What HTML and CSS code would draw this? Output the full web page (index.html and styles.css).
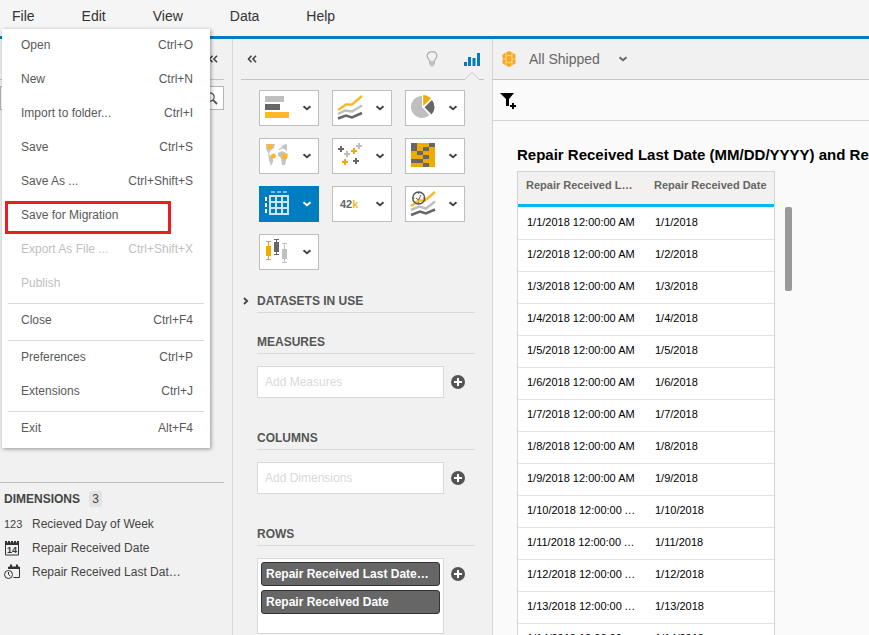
FILE: index.html
```html
<!DOCTYPE html>
<html lang="en">
<head>
    <meta charset="UTF-8">
    <meta name="viewport" content="width=device-width, initial-scale=1.0">
    <title>All Shipped</title>
    <link rel="stylesheet" href="styles.css">
</head>
<body>
    <svg class="defs" aria-hidden="true">
        <symbol id="chevron" viewBox="0 0 10 6"><path d="M1.5 1.2 L5 4.2 L8.5 1.2" fill="none" stroke="currentColor" stroke-width="2"/></symbol>
        <symbol id="collapse" viewBox="0 0 10 8"><path d="M4.5 .8 L1.5 4 L4.5 7.2 M9 .8 L6 4 L9 7.2" fill="none" stroke="currentColor" stroke-width="1.6"/></symbol>
        <symbol id="plus" viewBox="0 0 14 14"><circle cx="7" cy="7" r="7" fill="#555"/><path d="M7 3 V11 M3 7 H11" stroke="#fff" stroke-width="2"/></symbol>
    </svg>

    <nav class="menubar">
        <div class="menu">
            <button type="button" class="menu-title">File</button>
            <div class="dropdown">
                <button type="button" class="item"><span>Open</span><span>Ctrl+O</span></button>
                <button type="button" class="item"><span>New</span><span>Ctrl+N</span></button>
                <button type="button" class="item"><span>Import to folder...</span><span>Ctrl+I</span></button>
                <button type="button" class="item"><span>Save</span><span>Ctrl+S</span></button>
                <button type="button" class="item"><span>Save As ...</span><span>Ctrl+Shift+S</span></button>
                <button type="button" class="item marked"><span>Save for Migration</span></button>
                <button type="button" class="item" disabled><span>Export As File ...</span><span>Ctrl+Shift+X</span></button>
                <button type="button" class="item" disabled><span>Publish</span></button>
                <hr>
                <button type="button" class="item"><span>Close</span><span>Ctrl+F4</span></button>
                <hr>
                <button type="button" class="item"><span>Preferences</span><span>Ctrl+P</span></button>
                <button type="button" class="item"><span>Extensions</span><span>Ctrl+J</span></button>
                <hr>
                <button type="button" class="item"><span>Exit</span><span>Alt+F4</span></button>
            </div>
        </div>
        <button type="button" class="menu-title">Edit</button>
        <button type="button" class="menu-title">View</button>
        <button type="button" class="menu-title">Data</button>
        <button type="button" class="menu-title">Help</button>
    </nav>

    <div class="app">
        <aside class="data-panel">
            <div class="panel-head data-head">
                <button type="button" class="icon-btn" aria-label="Collapse data panel"><svg width="10" height="8"><use href="#collapse"/></svg></button>
            </div>
            <div class="search">
                <input type="text" aria-label="Search">
                <svg width="13" height="13" viewBox="0 0 13 13" fill="none" stroke="#555"><circle cx="5" cy="5" r="4.2" stroke-width="1.2"/><path d="M8.2 8.2 L12 12" stroke-width="1.8"/></svg>
            </div>
            <div class="measure-list"></div>
            <div class="dimensions">
                <h2>DIMENSIONS <span class="count">3</span></h2>
                <ul>
                    <li><span class="num">123</span>Recieved Day of Week</li>
                    <li>
                        <svg width="17" height="16" viewBox="0 0 17 16"><path d="M1.5 2.5 H14.5 V15 H1.5 Z" fill="none" stroke="#333"/><path d="M1 1 H15 V5 H1 Z" fill="#333"/><path d="M3.5 0 V2.5 M6.5 0 V2.5 M9.5 0 V2.5 M12.5 0 V2.5" stroke="#f1f1f1"/><text x="8" y="13" text-anchor="middle" class="cal-day">14</text></svg>
                        Repair Received Date
                    </li>
                    <li>
                        <svg width="17" height="16" viewBox="0 0 17 16" fill="none" stroke="#333"><path d="M4.5 4.5 V3 H15.5 V13.5 H9.5"/><path d="M4 4 H16" stroke-width="2"/><path d="M7 .5 V4 M13 .5 V4" stroke-width="2"/><circle cx="4.5" cy="10.5" r="4" fill="#f1f1f1"/><path d="M4.5 8 V10.5 L6.2 12"/></svg>
                        Repair Received Last Dat…
                    </li>
                </ul>
            </div>
        </aside>

        <section class="chart-panel">
            <div class="panel-head chart-head">
                <button type="button" class="icon-btn" aria-label="Collapse chart panel"><svg width="10" height="8"><use href="#collapse"/></svg></button>
                <button type="button" class="icon-btn bulb" aria-label="Suggestions">
                    <svg width="12" height="16" viewBox="0 0 12 16" fill="none" stroke="#b5b5b5" stroke-width="1.4"><path d="M4 11 C4 8.5 1.2 7.8 1.2 4.8 C1.2 2.4 3.3 .8 6 .8 S10.8 2.4 10.8 4.8 C10.8 7.8 8 8.5 8 11 Z"/><path d="M4 11 V13 H8 V11 M4.5 14.6 H7.5"/></svg>
                </button>
                <button type="button" class="icon-btn tab" aria-label="Chart builder">
                    <svg width="16" height="13" viewBox="0 0 16 13" fill="#007cc0"><path d="M0 9 H3 V13 H0 Z M4 4 H7 V13 H4 Z M8.5 5 H11.5 V13 H8.5 Z M13 0 H16 V13 H13 Z"/></svg>
                    <svg class="notch" width="14" height="8" viewBox="0 0 14 8"><path d="M0 7.5 L7 .5 L14 7.5 V8 H0 Z" fill="#f1f1f1"/><path d="M0 7.5 L7 .5 L14 7.5" fill="none" stroke="#ccc"/></svg>
                </button>
            </div>

            <div class="chart-types">
                <button type="button" aria-label="Bar chart">
                    <svg class="pic" viewBox="0 0 24 24"><path d="M0 0 H19 V6 H0 Z" fill="#bfbfbf"/><path d="M0 8 H15 V14 H0 Z" fill="#666"/><path d="M0 16 H24 V22 H0 Z" fill="#fcb827"/></svg>
                    <svg class="chev"><use href="#chevron"/></svg>
                </button>
                <button type="button" aria-label="Line chart">
                    <svg class="pic" viewBox="0 0 24 24" fill="none" stroke-width="2.5"><path d="M0 14 L8 8.5 H14 L24 0" stroke="#fcb827"/><path d="M0 18 L7 14.5 L14 15.5 L24 9.5" stroke="#bfbfbf"/><path d="M0 22.5 L8 19.5 L14 21.5 L24 17" stroke="#666"/></svg>
                    <svg class="chev"><use href="#chevron"/></svg>
                </button>
                <button type="button" aria-label="Pie chart">
                    <svg class="pic" viewBox="0 0 24 24"><path d="M11 0 A11 11 0 1 0 18.5 19 L11 11 Z" fill="#bfbfbf"/><path d="M12.2 -1 A11 11 0 0 1 20 2.4 L12.2 10 Z" fill="#f0ab00"/><path d="M21 4 A11 11 0 0 1 20.5 18.6 L13.5 11.2 Z" fill="#666"/></svg>
                    <svg class="chev"><use href="#chevron"/></svg>
                </button>
                <button type="button" aria-label="Geo chart">
                    <svg class="pic" viewBox="0 0 24 24"><path d="M1 0 H10 L9 4 L5 7 L4 10 L1 5 Z M3 9 L8 14 L8 18 L6 22 L4 16 Z M13 6 L18 1 L22 0 V7 L19 5 Z M13 9 L17 7 L23 10 L21 16 L20 21 H17 L16 14 L13 12 Z" fill="#c4c4c4"/><path d="M15 3 L19 6" stroke="#fff"/><g fill="#fcb827"><circle cx="5" cy="2.5" r="2.8"/><circle cx="8.4" cy="12" r="2.5"/><circle cx="19.5" cy="12.5" r="3"/></g></svg>
                    <svg class="chev"><use href="#chevron"/></svg>
                </button>
                <button type="button" aria-label="Scatter plot">
                    <svg class="pic" viewBox="0 0 24 24" stroke-width="2"><path d="M0 5 H6 M3 2 V8 M15 17 H21 M18 14 V20" stroke="#666"/><path d="M13 7 H19 M16 4 V10 M4 18 H10 M7 15 V21" stroke="#f0ab00"/><path d="M18 2 H24 M21 -1 V5 M6 10 H12 M9 7 V13" stroke="#bfbfbf"/></svg>
                    <svg class="chev"><use href="#chevron"/></svg>
                </button>
                <button type="button" aria-label="Heat map">
                    <svg class="pic" viewBox="0 0 24 24"><path d="M0 -1 H24 V23 H0 Z" fill="#f0ab00"/><path d="M0 -1 H6 V7 H0 Z M18 -1 H24 V3 H18 Z M12 3 H18 V7 H12 Z M6 7 H12 V11 H6 Z M12 11 H18 V15 H12 Z M0 15 H12 V19 H0 Z M12 19 H18 V23 H12 Z" fill="#666"/></svg>
                    <svg class="chev"><use href="#chevron"/></svg>
                </button>
                <button type="button" class="active" aria-label="Table">
                    <svg class="pic" viewBox="0 0 24 24" fill="none" stroke-width="2"><path d="M6 0 H10 M12 0 H16 M18 0 H22" stroke="#7fbddf"/><path d="M1 5 V9 M1 11 V15 M1 17 V21" stroke="#fff"/><path d="M5 4 H23 V22 H5 Z M5 10 H23 M5 16 H23 M11 4 V22 M17 4 V22" stroke="#cce5f2"/></svg>
                    <svg class="chev"><use href="#chevron"/></svg>
                </button>
                <button type="button" aria-label="Numeric point">
                    <span class="pic numeric">42<b>k</b></span>
                    <svg class="chev"><use href="#chevron"/></svg>
                </button>
                <button type="button" aria-label="Time series">
                    <svg class="pic" viewBox="0 0 24 24" fill="none" stroke-width="2.5"><path d="M0 14 L8 8.5 H14 L24 0" stroke="#fcb827"/><path d="M0 18 L8 14.5 L15 16.5 L24 9.5" stroke="#bfbfbf"/><path d="M0 23 L9 19.5 L15 21.5 L24 17.5" stroke="#666"/><circle cx="7.7" cy="6" r="6" stroke="#555" stroke-width="1.4"/><path d="M5 6 L7.5 8 L10 3 M7.7 0 V2 M7.7 10 V12 M2 6 H3.5 M12 6 H13.5" stroke="#555" stroke-width="1"/></svg>
                    <svg class="chev"><use href="#chevron"/></svg>
                </button>
                <button type="button" aria-label="Box plot">
                    <svg class="pic" viewBox="0 0 24 24"><path d="M1 6 H6 V16 H1 Z M3 1 H4 V20 H3 Z M1 1 H6 V2 H1 Z M1 19 H6 V20 H1 Z" fill="#f0ab00"/><path d="M9 2 H14 V12 H9 Z M11 -1 H12 V15 H11 Z M9 -1 H14 V0 H9 Z M9 14 H14 V15 H9 Z" fill="#666"/><path d="M17 9 H22 V19 H17 Z M19 3 H20 V23 H19 Z M17 3 H22 V4 H17 Z M17 22 H22 V23 H17 Z" fill="#bfbfbf"/></svg>
                    <svg class="chev"><use href="#chevron"/></svg>
                </button>
            </div>

            <div class="builder">
                <h3 class="datasets"><svg width="6" height="8" viewBox="0 0 6 8"><path d="M1 1 L4.2 4 L1 7" fill="none" stroke="#444" stroke-width="1.8"/></svg>DATASETS IN USE</h3>

                <h3><label for="measures">MEASURES</label></h3>
                <div class="shelf">
                    <input type="text" id="measures" placeholder="Add Measures">
                    <button type="button" class="icon-btn" aria-label="Add measure"><svg width="14" height="14"><use href="#plus"/></svg></button>
                </div>

                <h3><label for="columns">COLUMNS</label></h3>
                <div class="shelf">
                    <input type="text" id="columns" placeholder="Add Dimensions">
                    <button type="button" class="icon-btn" aria-label="Add column"><svg width="14" height="14"><use href="#plus"/></svg></button>
                </div>

                <h3>ROWS</h3>
                <div class="shelf">
                    <div class="chips">
                        <button type="button" class="chip">Repair Received Last Date…</button>
                        <button type="button" class="chip">Repair Received Date</button>
                    </div>
                    <button type="button" class="icon-btn" aria-label="Add row"><svg width="14" height="14"><use href="#plus"/></svg></button>
                </div>
            </div>
        </section>

        <main class="canvas">
            <button type="button" class="dataset">
                <svg width="14" height="16" viewBox="0 0 14 16"><path d="M7 0 L10 1.5 L13.5 3.5 V12.5 L10 14.5 L7 16 L4 14.5 L.5 12.5 V3.5 L4 1.5 Z" fill="#f5a81c"/><path d="M7 4 L10 5.5 V10.5 L7 12 L4 10.5 V5.5 Z M4 1.5 V5.5 M10 1.5 V5.5 M4 10.5 V14.5 M10 10.5 V14.5 M0 8 H4 M10 8 H14" fill="none" stroke="#fde3b0" stroke-width=".9"/></svg>
                <span>All Shipped</span>
                <svg class="chev"><use href="#chevron"/></svg>
            </button>
            <div class="filter-bar">
                <button type="button" class="icon-btn" aria-label="Add filter">
                    <svg width="17" height="17" viewBox="0 0 17 17"><path d="M0 0 H14 L9 6 V13 H6 V6 Z"/><path d="M13 10 V16 M10 13 H16" stroke="#000" stroke-width="2"/></svg>
                </button>
            </div>
            <h1>Repair Received Last Date (MM/DD/YYYY) and Repair Received Date</h1>
            <div class="grid-wrap">
                <table>
                    <thead>
                        <tr><th>Repair Received Last Date</th><th>Repair Received Date</th></tr>
                    </thead>
                    <tbody>
                        <tr><td>1/1/2018 12:00:00 AM</td><td>1/1/2018</td></tr>
                        <tr><td>1/2/2018 12:00:00 AM</td><td>1/2/2018</td></tr>
                        <tr><td>1/3/2018 12:00:00 AM</td><td>1/3/2018</td></tr>
                        <tr><td>1/4/2018 12:00:00 AM</td><td>1/4/2018</td></tr>
                        <tr><td>1/5/2018 12:00:00 AM</td><td>1/5/2018</td></tr>
                        <tr><td>1/6/2018 12:00:00 AM</td><td>1/6/2018</td></tr>
                        <tr><td>1/7/2018 12:00:00 AM</td><td>1/7/2018</td></tr>
                        <tr><td>1/8/2018 12:00:00 AM</td><td>1/8/2018</td></tr>
                        <tr><td>1/9/2018 12:00:00 AM</td><td>1/9/2018</td></tr>
                        <tr><td>1/10/2018 12:00:00 AM</td><td>1/10/2018</td></tr>
                        <tr><td>1/11/2018 12:00:00 AM</td><td>1/11/2018</td></tr>
                        <tr><td>1/12/2018 12:00:00 AM</td><td>1/12/2018</td></tr>
                        <tr><td>1/13/2018 12:00:00 AM</td><td>1/13/2018</td></tr>
                        <tr><td>1/14/2018 12:00:00 AM</td><td>1/14/2018</td></tr>
                    </tbody>
                </table>
                <div class="scroll-thumb"></div>
            </div>
        </main>
    </div>
</body>
</html>
```
FILE: styles.css
```css
*, *::after {
    box-sizing: border-box;
}
body {
    margin: 0;
    height: 100vh;
    display: flex;
    flex-direction: column;
    overflow: hidden;
    font-family: "Liberation Sans", Arial, sans-serif;
    font-size: 12px;
    color: #444;
    background: #f1f1f1;
}
button, input {
    font: inherit;
    color: inherit;
}
button {
    background: none;
    border: none;
    padding: 0;
    cursor: pointer;
}
svg {
    display: block;
    overflow: visible;
    flex: none;
}
h1, h2, h3, ul {
    margin: 0;
    padding: 0;
}
.defs {
    position: absolute;
    width: 0;
    height: 0;
}
.chev {
    width: 10px;
    height: 6px;
}

/* menu bar */
.menubar {
    flex: none;
    display: flex;
    gap: 47px;
    height: 39px;
    padding: 0 12px 4px;
    background: #f5f5f5;
    border-bottom: 3px solid #007cc0;
}
.menu {
    display: flex;
}
.menu-title {
    font-size: 14px;
    line-height: 32px;
    color: #333;
}
.dropdown {
    position: absolute;
    top: 29px;
    left: 2px;
    z-index: 10;
    width: 208px;
    padding-bottom: 2px;
    background: #fff;
    box-shadow: 1px 1px 4px rgba(0, 0, 0, 0.4);
}
.item {
    position: relative;
    display: flex;
    justify-content: space-between;
    width: 100%;
    padding: 0 17px 2px 19px;
    line-height: 32px;
    color: #595959;
}
.item:disabled {
    color: #bfbfbf;
}
.marked::after {
    content: "";
    position: absolute;
    top: 2px;
    left: 3px;
    width: 166px;
    height: 33px;
    border: 3px solid #ed1c24;
}
.dropdown hr {
    height: 1px;
    margin: 2px 6px 0;
    border: none;
    background: #d9d9d9;
}

.app {
    flex: 1;
    min-height: 0;
    display: flex;
}
.panel-head {
    flex: none;
    display: flex;
    align-items: center;
    height: 41px;
    border-bottom: 1px solid #c4c4c4;
}

/* data panel */
.data-panel {
    flex: none;
    display: flex;
    flex-direction: column;
    width: 233px;
    padding-right: 8px;
    border-right: 1px solid #d9d9d9;
}
.data-head {
    justify-content: flex-end;
    padding-right: 6px;
}
.search {
    display: flex;
    align-items: center;
    height: 24px;
    margin-top: 6px;
    padding-right: 5px;
    background: #fff;
    border: 1px solid #b5b5b5;
}
.search input {
    flex: 1;
    min-width: 0;
    border: none;
    outline: none;
    background: none;
}
.measure-list {
    height: 372px;
}
.dimensions {
    padding: 4px 0 0 4px;
    border-top: 1px solid #bfbfbf;
}
.dimensions h2 {
    font-size: 12px;
    line-height: 25px;
}
.count {
    margin-left: 6px;
    padding: 1px 3px;
    border-radius: 2px;
    background: #e3e3e3;
    font-weight: normal;
}
.dimensions ul {
    list-style: none;
}
.dimensions li {
    display: flex;
    align-items: center;
    gap: 11px;
    line-height: 24px;
}
.num {
    width: 17px;
    font-size: 11px;
}
.cal-day {
    font-size: 9px;
    font-weight: bold;
    fill: #333;
}

/* chart builder */
.chart-panel {
    flex: none;
    width: 260px;
    padding: 0 8px;
    border-right: 1px solid #d4d4d4;
}
.chart-head {
    padding: 0 4px 0 6px;
}
.bulb {
    margin-left: auto;
    margin-right: 26px;
}
.tab {
    position: relative;
}
.notch {
    position: absolute;
    left: 1px;
    top: 19px;
}
.chart-types {
    display: grid;
    grid-template-columns: repeat(3, 60px);
    gap: 12px 13px;
    padding: 10px 18px 0;
}
.chart-types button {
    display: flex;
    align-items: center;
    justify-content: space-between;
    height: 36px;
    padding: 0 6px 0 5px;
    border: 1px solid #bfbfbf;
    background: #fff;
}
.chart-types .active {
    background: #007cc0;
    border-color: #007cc0;
    color: #fff;
}
.pic {
    width: 24px;
    height: 24px;
}
.numeric {
    padding-left: 2px;
    font-size: 11px;
    font-weight: bold;
    line-height: 24px;
    text-align: left;
    color: #666;
}
.numeric b {
    color: #fcb827;
}
.builder {
    padding: 23px 9px 0 16px;
}
.builder h3 {
    height: 20px;
    border-bottom: 1px solid #d9d9d9;
    font-size: 12px;
    line-height: 16px;
    color: #555;
}
.builder .datasets {
    display: flex;
    gap: 8px;
    margin: 0 0 21px -14px;
    border: none;
    background: linear-gradient(#d9d9d9, #d9d9d9) 14px 100% / 100% 1px no-repeat;
}
.datasets svg {
    margin-top: 4px;
}
.shelf {
    display: flex;
    align-items: flex-start;
    gap: 7px;
    margin: 12px 0 32px;
}
.shelf input, .chips {
    flex: 1;
    min-width: 0;
    min-height: 32px;
    background: #fff;
    border: 1px solid #d9d9d9;
}
.shelf input {
    padding: 0 7px;
}
.shelf input::placeholder {
    color: #d9d9d9;
    opacity: 1;
}
.shelf .icon-btn {
    margin: 9px 10px 0 0;
}
.chips {
    display: flex;
    flex-direction: column;
    gap: 4px;
    height: 76px;
    padding: 3px;
}
.chip {
    height: 24px;
    padding: 0 4px;
    overflow: hidden;
    border: 1px solid #333;
    border-radius: 3px;
    background: #666;
    color: #fff;
    font-weight: bold;
    text-align: left;
    white-space: nowrap;
}

/* canvas */
.canvas {
    flex: 1;
    min-width: 0;
    overflow: hidden;
    background: #fafafa;
}
.dataset {
    display: flex;
    align-items: center;
    width: 100%;
    height: 41px;
    padding: 0 9px;
    border-bottom: 1px solid #c8c8c8;
    background: #f1f1f1;
    font-size: 14px;
    color: #666;
}
.dataset span {
    margin: 0 18px 0 13px;
}
.filter-bar {
    height: 41px;
    padding: 13px 7px;
    border-bottom: 1px solid #d4d4d4;
}
.canvas h1 {
    padding: 24px 0 6px 24px;
    font-size: 15px;
    line-height: 20px;
    color: #000;
    white-space: nowrap;
}
.grid-wrap {
    display: flex;
    gap: 10px;
    padding-left: 24px;
}
table {
    width: 258px;
    table-layout: fixed;
    border-collapse: separate;
    border-spacing: 0;
    border: 1px solid #d4d4d4;
    background: #fff;
    font-size: 11px;
}
th, td {
    overflow: hidden;
    text-align: left;
    text-overflow: ellipsis;
    white-space: nowrap;
}
th {
    height: 35px;
    padding: 0 4px 6px 8px;
    border-bottom: 3px solid #00b9f2;
    background: #f2f1f0;
    color: #666;
}
th:first-child {
    padding-right: 12px;
}
td {
    height: 32px;
    padding: 0 10px 4px 9px;
    border-top: 1px solid #e3e3e3;
    color: #000;
}
tbody tr:first-child td {
    border-top-color: #fff;
}
.scroll-thumb {
    flex: none;
    width: 7px;
    height: 84px;
    margin-top: 36px;
    border-radius: 2px;
    background: #999;
}
```
